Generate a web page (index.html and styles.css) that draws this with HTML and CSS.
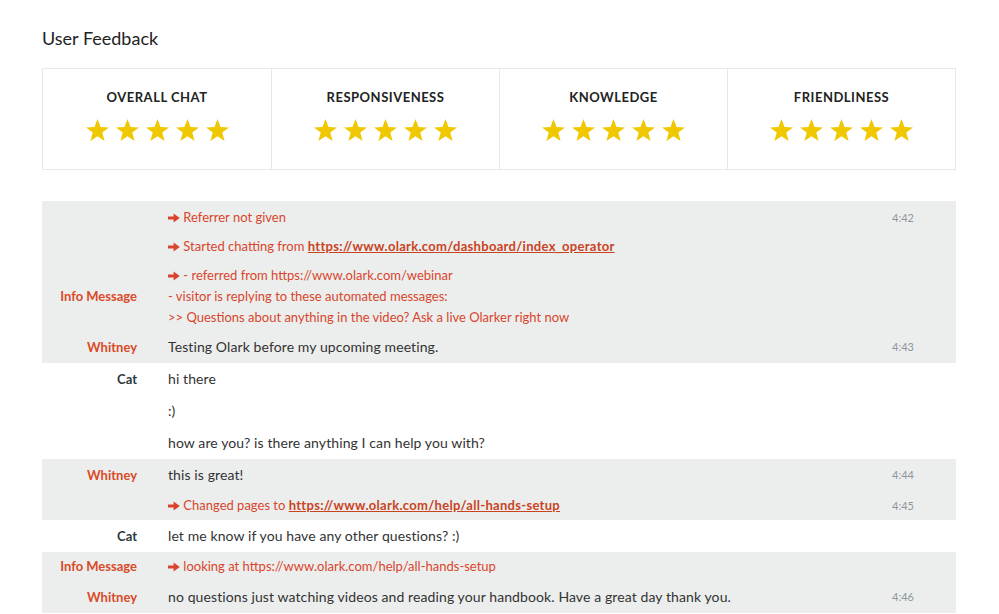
FILE: index.html
```html
<!DOCTYPE html>
<html lang="en">
<head>
  <meta charset="UTF-8" />
  <title>User Feedback</title>
  <link rel="stylesheet" href="styles.css">
</head>
<body>
  <div class="page">
    <h1>User Feedback</h1>

    <!-- Ratings -->
    <div class="ratings">
      <div class="rating">
        <h3>Overall Chat</h3>
        <div class="stars">
          <svg viewBox="0 0 24 24"><polygon points="12,1 14.9,8.6 23,9 16.6,14 18.8,22 12,17.5 5.2,22 7.4,14 1,9 9.1,8.6"/></svg>
          <svg viewBox="0 0 24 24"><polygon points="12,1 14.9,8.6 23,9 16.6,14 18.8,22 12,17.5 5.2,22 7.4,14 1,9 9.1,8.6"/></svg>
          <svg viewBox="0 0 24 24"><polygon points="12,1 14.9,8.6 23,9 16.6,14 18.8,22 12,17.5 5.2,22 7.4,14 1,9 9.1,8.6"/></svg>
          <svg viewBox="0 0 24 24"><polygon points="12,1 14.9,8.6 23,9 16.6,14 18.8,22 12,17.5 5.2,22 7.4,14 1,9 9.1,8.6"/></svg>
          <svg viewBox="0 0 24 24"><polygon points="12,1 14.9,8.6 23,9 16.6,14 18.8,22 12,17.5 5.2,22 7.4,14 1,9 9.1,8.6"/></svg>
        </div>
      </div>
      <div class="rating">
        <h3>Responsiveness</h3>
        <div class="stars">
          <svg viewBox="0 0 24 24"><polygon points="12,1 14.9,8.6 23,9 16.6,14 18.8,22 12,17.5 5.2,22 7.4,14 1,9 9.1,8.6"/></svg>
          <svg viewBox="0 0 24 24"><polygon points="12,1 14.9,8.6 23,9 16.6,14 18.8,22 12,17.5 5.2,22 7.4,14 1,9 9.1,8.6"/></svg>
          <svg viewBox="0 0 24 24"><polygon points="12,1 14.9,8.6 23,9 16.6,14 18.8,22 12,17.5 5.2,22 7.4,14 1,9 9.1,8.6"/></svg>
          <svg viewBox="0 0 24 24"><polygon points="12,1 14.9,8.6 23,9 16.6,14 18.8,22 12,17.5 5.2,22 7.4,14 1,9 9.1,8.6"/></svg>
          <svg viewBox="0 0 24 24"><polygon points="12,1 14.9,8.6 23,9 16.6,14 18.8,22 12,17.5 5.2,22 7.4,14 1,9 9.1,8.6"/></svg>
        </div>
      </div>
      <div class="rating">
        <h3>Knowledge</h3>
        <div class="stars">
          <svg viewBox="0 0 24 24"><polygon points="12,1 14.9,8.6 23,9 16.6,14 18.8,22 12,17.5 5.2,22 7.4,14 1,9 9.1,8.6"/></svg>
          <svg viewBox="0 0 24 24"><polygon points="12,1 14.9,8.6 23,9 16.6,14 18.8,22 12,17.5 5.2,22 7.4,14 1,9 9.1,8.6"/></svg>
          <svg viewBox="0 0 24 24"><polygon points="12,1 14.9,8.6 23,9 16.6,14 18.8,22 12,17.5 5.2,22 7.4,14 1,9 9.1,8.6"/></svg>
          <svg viewBox="0 0 24 24"><polygon points="12,1 14.9,8.6 23,9 16.6,14 18.8,22 12,17.5 5.2,22 7.4,14 1,9 9.1,8.6"/></svg>
          <svg viewBox="0 0 24 24"><polygon points="12,1 14.9,8.6 23,9 16.6,14 18.8,22 12,17.5 5.2,22 7.4,14 1,9 9.1,8.6"/></svg>
        </div>
      </div>
      <div class="rating">
        <h3>Friendliness</h3>
        <div class="stars">
          <svg viewBox="0 0 24 24"><polygon points="12,1 14.9,8.6 23,9 16.6,14 18.8,22 12,17.5 5.2,22 7.4,14 1,9 9.1,8.6"/></svg>
          <svg viewBox="0 0 24 24"><polygon points="12,1 14.9,8.6 23,9 16.6,14 18.8,22 12,17.5 5.2,22 7.4,14 1,9 9.1,8.6"/></svg>
          <svg viewBox="0 0 24 24"><polygon points="12,1 14.9,8.6 23,9 16.6,14 18.8,22 12,17.5 5.2,22 7.4,14 1,9 9.1,8.6"/></svg>
          <svg viewBox="0 0 24 24"><polygon points="12,1 14.9,8.6 23,9 16.6,14 18.8,22 12,17.5 5.2,22 7.4,14 1,9 9.1,8.6"/></svg>
          <svg viewBox="0 0 24 24"><polygon points="12,1 14.9,8.6 23,9 16.6,14 18.8,22 12,17.5 5.2,22 7.4,14 1,9 9.1,8.6"/></svg>
        </div>
      </div>
    </div>

    <!-- Transcript -->
    <div class="transcript">
      <div class="group visitor first">
        <div class="row info">
          <div class="who"></div>
          <div class="msg"><svg class="arrow" viewBox="0 0 12 10"><path d="M0 3.4h5.6V0.4L11.8 5 5.6 9.6V6.6H0z"/></svg> Referrer not given</div>
          <div class="time">4:42</div>
        </div>
        <div class="row info">
          <div class="who"></div>
          <div class="msg"><svg class="arrow" viewBox="0 0 12 10"><path d="M0 3.4h5.6V0.4L11.8 5 5.6 9.6V6.6H0z"/></svg> Started chatting from <a href="#">https://www.olark.com/dashboard/index_operator</a></div>
          <div class="time"></div>
        </div>
        <div class="row info multi">
          <div class="who">Info Message</div>
          <div class="msg"><svg class="arrow" viewBox="0 0 12 10"><path d="M0 3.4h5.6V0.4L11.8 5 5.6 9.6V6.6H0z"/></svg> - referred from https://www.olark.com/webinar<br>- visitor is replying to these automated messages:<br>&gt;&gt; Questions about anything in the video? Ask a live Olarker right now</div>
          <div class="time"></div>
        </div>
        <div class="row">
          <div class="who">Whitney</div>
          <div class="msg">Testing Olark before my upcoming meeting.</div>
          <div class="time">4:43</div>
        </div>
      </div>

      <div class="group operator">
        <div class="row">
          <div class="who">Cat</div>
          <div class="msg">hi there</div>
          <div class="time"></div>
        </div>
        <div class="row">
          <div class="who"></div>
          <div class="msg">:)</div>
          <div class="time"></div>
        </div>
        <div class="row">
          <div class="who"></div>
          <div class="msg">how are you? is there anything I can help you with?</div>
          <div class="time"></div>
        </div>
      </div>

      <div class="group visitor">
        <div class="row">
          <div class="who">Whitney</div>
          <div class="msg">this is great!</div>
          <div class="time">4:44</div>
        </div>
        <div class="row info">
          <div class="who"></div>
          <div class="msg"><svg class="arrow" viewBox="0 0 12 10"><path d="M0 3.4h5.6V0.4L11.8 5 5.6 9.6V6.6H0z"/></svg> Changed pages to <a href="#">https://www.olark.com/help/all-hands-setup</a></div>
          <div class="time">4:45</div>
        </div>
      </div>

      <div class="group operator">
        <div class="row">
          <div class="who">Cat</div>
          <div class="msg">let me know if you have any other questions? :)</div>
          <div class="time"></div>
        </div>
      </div>

      <div class="group visitor">
        <div class="row info">
          <div class="who">Info Message</div>
          <div class="msg"><svg class="arrow" viewBox="0 0 12 10"><path d="M0 3.4h5.6V0.4L11.8 5 5.6 9.6V6.6H0z"/></svg> looking at https://www.olark.com/help/all-hands-setup</div>
          <div class="time"></div>
        </div>
        <div class="row">
          <div class="who">Whitney</div>
          <div class="msg">no questions just watching videos and reading your handbook. Have a great day thank you.</div>
          <div class="time">4:46</div>
        </div>
      </div>
    </div>
  </div>
</body>
</html>
```

FILE: styles.css
```css
body {
  margin: 0;
  background: #fff;
  font-family: Lato, "Open Sans", sans-serif;
  color: #333;
}
.page {
  padding: 0 43px 0 42px;
}
h1 {
  margin: 0;
  padding-top: 26px;
  font-size: 18px;
  font-weight: 400;
  line-height: 24px;
  color: #222;
}
/* ratings box */
.ratings {
  margin-top: 18px;
  display: grid;
  grid-template-columns: repeat(4, 1fr);
  border: 1px solid #e8e8e8;
}
.rating {
  height: 100px;
  text-align: center;
  border-left: 1px solid #e8e8e8;
}
.rating:first-child {
  border-left: none;
}
.rating h3 {
  margin: 20px 0 0;
  font-size: 13px;
  line-height: 17px;
  font-weight: 700;
  letter-spacing: 0.5px;
  text-transform: uppercase;
  color: #222;
}
.stars {
  margin-top: 12px;
  display: flex;
  justify-content: center;
  gap: 5px;
}
.stars svg {
  width: 25px;
  height: 25px;
  fill: #f0c800;
}
/* transcript */
.transcript {
  margin-top: 31px;
}
.group.visitor {
  background: #eceeed;
}
.group.operator {
  background: #fff;
}
.group.first {
  padding-top: 2px;
}
.row {
  display: grid;
  grid-template-columns: 95px 1fr 60px;
  column-gap: 31px;
  padding: 5px 42px 5px 0;
  align-items: center;
  font-size: 14px;
  line-height: 22px;
}
.row.info {
  padding-top: 4px;
  padding-bottom: 4px;
  line-height: 21px;
}
.row.multi {
  padding-bottom: 3px;
}
.who {
  text-align: right;
  font-size: 13px;
  font-weight: 700;
}
.visitor .who {
  color: #d94a28;
}
.operator .who {
  color: #2b3a40;
}
.msg {
  color: #333;
  letter-spacing: 0.1px;
}
.row.info .msg {
  font-size: 13px;
  letter-spacing: 0;
  color: #d9452c;
}
.row.info .msg a {
  color: #c9431f;
  font-weight: 700;
  letter-spacing: 0.3px;
  text-decoration: underline;
}
.arrow {
  width: 12px;
  height: 10px;
  fill: #d9452c;
  vertical-align: -1px;
}
.time {
  align-self: start;
  text-align: right;
  font-size: 11px;
  color: #8c969a;
}
```
